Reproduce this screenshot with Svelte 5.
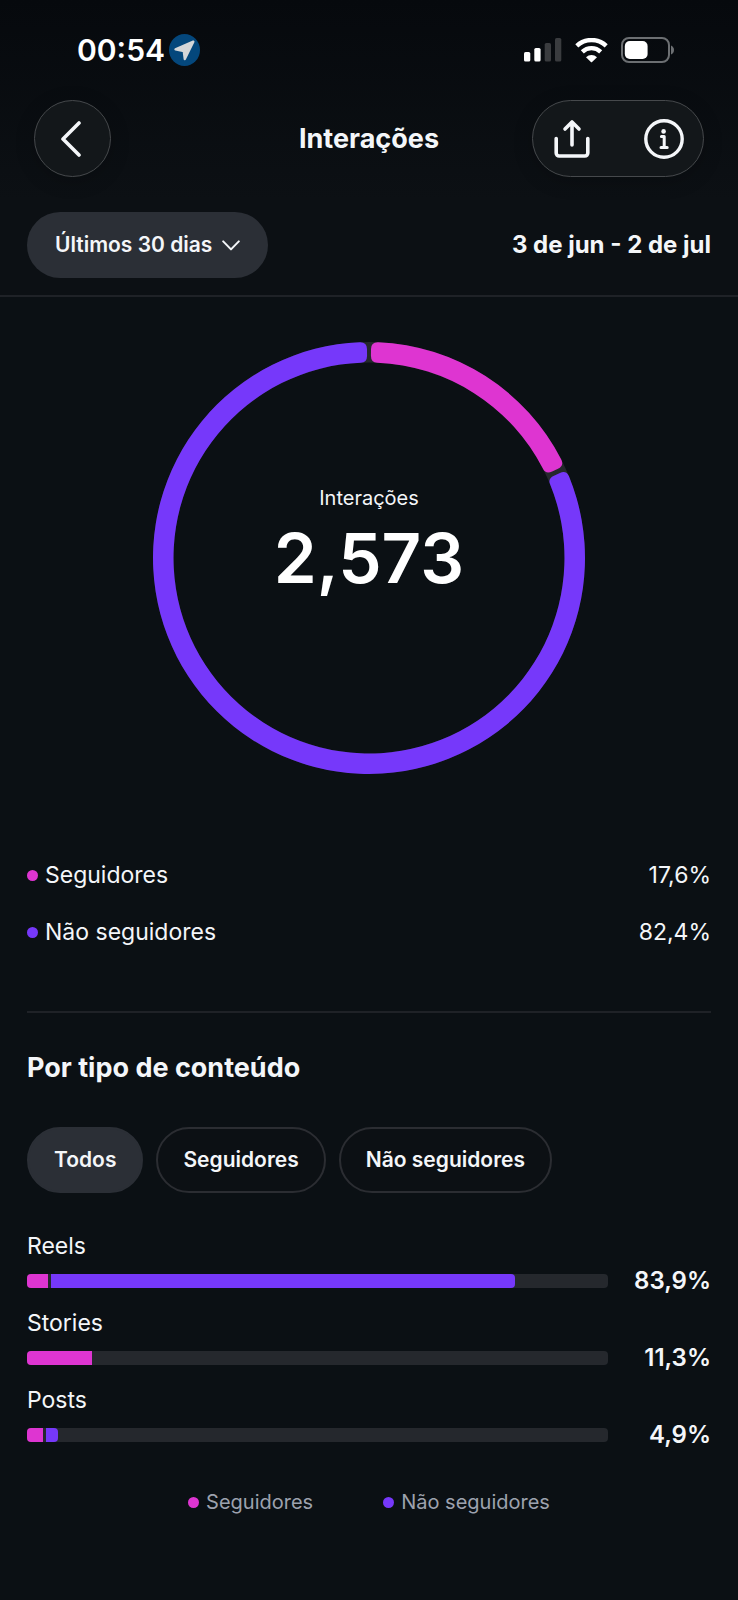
<script lang="ts">
  type Audience = "all" | "followers" | "others";

  const followers = 17.6;

  const split = [
    { label: "Seguidores", value: "17,6%", tone: "pink" },
    { label: "Não seguidores", value: "82,4%", tone: "purple" },
  ];

  const chips: { id: Audience; label: string }[] = [
    { id: "all", label: "Todos" },
    { id: "followers", label: "Seguidores" },
    { id: "others", label: "Não seguidores" },
  ];

  const types = [
    { name: "Reels", total: "83,9%", pink: 3.7, purple: 79.7 },
    { name: "Stories", total: "11,3%", pink: 11.2, purple: 0 },
    { name: "Posts", total: "4,9%", pink: 2.7, purple: 2.2 },
  ];

  let audience = $state<Audience>("all");
  let period = $state("30");

  const SIZE = 434;
  const OUTER = 216;
  const INNER = 195.5;
  const CORNER = 7;
  const GAP = 1.1;

  function point(radius: number, deg: number) {
    const rad = ((deg - 90) * Math.PI) / 180;
    const x = SIZE / 2 + radius * Math.cos(rad);
    const y = SIZE / 2 + radius * Math.sin(rad);
    return `${x.toFixed(2)} ${y.toFixed(2)}`;
  }

  // Ring slice between two angles, with all four corners rounded.
  function slice(from: number, to: number) {
    const cut = (CORNER / OUTER) * (180 / Math.PI);
    const large = to - from > 180 ? 1 : 0;
    return [
      `M${point(OUTER, from + cut)}`,
      `A${OUTER} ${OUTER} 0 ${large} 1 ${point(OUTER, to - cut)}`,
      `Q${point(OUTER, to)} ${point(OUTER - CORNER, to)}`,
      `L${point(INNER + CORNER, to)}`,
      `Q${point(INNER, to)} ${point(INNER, to - cut)}`,
      `A${INNER} ${INNER} 0 ${large} 0 ${point(INNER, from + cut)}`,
      `Q${point(INNER, from)} ${point(INNER + CORNER, from)}`,
      `L${point(OUTER - CORNER, from)}`,
      `Q${point(OUTER, from)} ${point(OUTER, from + cut)}Z`,
    ].join("");
  }

  // The first slice keeps its full share; the gap is taken from the second.
  const turn = (followers / 100) * 360 + GAP;
  const pinkSlice = slice(GAP / 2, turn + GAP / 4);
  const purpleSlice = slice(turn + GAP * 1.4, 360 - GAP / 2);
</script>

<div class="screen">
  <div class="top">
    <div class="status">
      <div class="clock">
        <span>00:54</span>
        <svg width="31" height="32" viewBox="0 0 31 32" aria-hidden="true">
          <ellipse cx="15.5" cy="16" rx="15.5" ry="16" fill="#04477c" />
          <path
            d="M24.3 7.6 6.5 15.3 14.8 17.2 15.8 25Z"
            fill="#d4d6d8"
            stroke="#d4d6d8"
            stroke-width="2.4"
            stroke-linejoin="round"
          />
        </svg>
      </div>
      <div class="indicators" aria-hidden="true">
        <svg width="38" height="24" viewBox="0 0 38 24">
          <rect x="0" y="14" width="6.3" height="9.5" rx="1.6" fill="#fff" />
          <rect x="10.3" y="10" width="6.3" height="13.5" rx="1.6" fill="#fff" />
          <rect x="20.7" y="5" width="6.3" height="18.5" rx="1.6" fill="#3a3c3f" />
          <rect x="31" y="0" width="6.3" height="23.5" rx="1.6" fill="#3a3c3f" />
        </svg>
        <svg width="33" height="25" viewBox="0 0 33 25" fill="none" stroke="#fff">
          <path d="M1.8 7.8A21.5 21.5 0 0 1 31.2 7.8" stroke-width="4.4" />
          <path d="M7.3 13.8A13.4 13.4 0 0 1 25.7 13.8" stroke-width="4.4" />
          <path
            d="M11 19.2A8 8 0 0 1 22 19.2L17.1 24.1Q16.5 24.6 15.9 24.1Z"
            fill="#fff"
            stroke="none"
          />
        </svg>
        <svg width="53" height="26" viewBox="0 0 53 26">
          <rect x="1" y="1" width="47" height="24" rx="7" fill="none" stroke="#6c6f72" stroke-width="2" />
          <rect x="3.8" y="4" width="22.8" height="18" rx="5" fill="#fff" />
          <path d="M50 8.5Q53 10 53 13T50 17.5Z" fill="#6c6f72" />
        </svg>
      </div>
    </div>

    <header class="bar">
      <button class="glass back" type="button" aria-label="Voltar">
        <svg width="20" height="36" viewBox="0 0 20 36" fill="none" stroke="#f4f6f9" stroke-width="3.6" stroke-linecap="round" stroke-linejoin="round">
          <path d="M18 2 2 18 18 34" />
        </svg>
      </button>
      <h1>Interações</h1>
      <div class="glass actions">
        <button type="button" aria-label="Compartilhar">
          <svg width="36" height="40" viewBox="0 0 36 40" fill="none" stroke="#f4f6f9" stroke-width="3.6" stroke-linecap="round" stroke-linejoin="round">
            <path d="M2.2 19.5V34a3 3 0 0 0 3 3h25.6a3 3 0 0 0 3-3V19.5" />
            <path d="M18 26V3M11 10l7-7 7 7" />
          </svg>
        </button>
        <button type="button" aria-label="Informações">
          <svg width="40" height="40" viewBox="0 0 40 40" fill="none" stroke="#f4f6f9" stroke-linecap="round" stroke-linejoin="round">
            <circle cx="20" cy="20" r="18.2" stroke-width="3.4" />
            <circle cx="19.6" cy="12.4" r="2.3" fill="#f4f6f9" stroke="none" />
            <path d="M17.4 17.6h2.8v10.6M17 28.4h6.2" stroke-width="3" />
          </svg>
        </button>
      </div>
    </header>

    <div class="filters">
      <label class="period">
        <select bind:value={period} aria-label="Período">
          <option value="7">Últimos 7 dias</option>
          <option value="30">Últimos 30 dias</option>
          <option value="90">Últimos 90 dias</option>
        </select>
        <svg width="18" height="11" viewBox="0 0 18 11" fill="none" stroke="#f4f6f9" stroke-width="2" stroke-linecap="round" stroke-linejoin="round" aria-hidden="true">
          <path d="M1.2 1.4 9 9.4l7.8-8" />
        </svg>
      </label>
      <strong>3 de jun - 2 de jul</strong>
    </div>
  </div>

  <main>
    <div class="donut">
      <svg viewBox="0 0 {SIZE} {SIZE}" aria-hidden="true">
        <circle cx={SIZE / 2} cy={SIZE / 2} r={(OUTER + INNER) / 2} fill="none" stroke="#25282d" stroke-width={OUTER - INNER} />
        <path d={pinkSlice} fill="#de35d1" />
        <path d={purpleSlice} fill="#7638fa" />
      </svg>
      <div class="total">
        <span class="total-label">Interações</span>
        <span class="total-value">2,573</span>
      </div>
    </div>

    <ul class="split">
      {#each split as row}
        <li>
          <span class="key"><i class="dot {row.tone}"></i>{row.label}</span>
          <span>{row.value}</span>
        </li>
      {/each}
    </ul>

    <section>
      <h2>Por tipo de conteúdo</h2>
      <div class="chips">
        {#each chips as chip}
          <button
            type="button"
            class="chip"
            class:active={audience === chip.id}
            aria-pressed={audience === chip.id}
            onclick={() => (audience = chip.id)}
          >
            {chip.label}
          </button>
        {/each}
      </div>

      <div class="types">
        {#each types as type}
          <div class="type">
            <span class="type-name">{type.name}</span>
            <div class="type-row">
              <div class="track">
                <div class="pink" style:width="{type.pink}%"></div>
                <div class="purple" style:width="{type.purple}%"></div>
              </div>
              <span class="type-total">{type.total}</span>
            </div>
          </div>
        {/each}
      </div>

      <div class="legend">
        <span class="key"><i class="dot pink"></i>Seguidores</span>
        <span class="key"><i class="dot purple"></i>Não seguidores</span>
      </div>
    </section>
  </main>
</div>

<style>
  :global(body) {
    margin: 0;
    background: #0b1014;
  }

  .screen {
    min-height: 100vh;
    color: #f4f6f9;
    background: #0b1014;
    font-family: Inter, "Liberation Sans", sans-serif;
    font-size: 23px;
    line-height: 30px;
  }

  button,
  select {
    padding: 0;
    border: 0;
    background: none;
    color: inherit;
    font: inherit;
    cursor: pointer;
  }

  svg {
    display: block;
  }

  .top {
    background: linear-gradient(#06090d, #0c1014 200px);
    border-bottom: 2px solid #1f2227;
  }

  .status {
    display: flex;
    align-items: center;
    justify-content: space-between;
    height: 100px;
    padding: 0 64px 0 77px;
  }

  .clock {
    display: flex;
    align-items: center;
    gap: 4px;
    color: #fff;
    font-size: 30px;
    font-weight: 600;
  }

  .indicators {
    display: flex;
    align-items: center;
    gap: 13px;
  }

  .bar {
    display: grid;
    grid-template-columns: 1fr auto 1fr;
    align-items: center;
    padding: 0 34px;
  }

  h1,
  h2 {
    margin: 0;
    font-size: 27px;
    font-weight: 700;
    line-height: 34px;
  }

  .glass {
    box-sizing: border-box;
    display: flex;
    align-items: center;
    height: 77px;
    border: 1px solid #46494c;
    border-radius: 39px;
    background: #13171a;
    box-shadow: 0 4px 20px rgb(0 0 0 / 0.2);
  }

  .back {
    justify-content: center;
    width: 77px;
  }

  .back svg {
    margin-right: 3px;
  }

  .actions {
    justify-self: end;
    gap: 54px;
    padding: 0 19px 0 21px;
  }

  .filters {
    display: flex;
    align-items: center;
    justify-content: space-between;
    padding: 35px 27px 17px;
  }

  .filters strong {
    font-size: 24px;
    font-weight: 700;
  }

  .period {
    display: flex;
    align-items: center;
    gap: 9px;
    height: 66px;
    padding: 0 28px;
    border-radius: 33px;
    background: #2b2f36;
    font-size: 21px;
    font-weight: 600;
  }

  .period select {
    appearance: none;
  }

  main {
    padding: 0 27px 80px;
  }

  .donut {
    display: grid;
    place-items: center;
    padding: 44px 0 67px;
  }

  .donut > * {
    grid-area: 1 / 1;
  }

  .donut svg {
    width: 434px;
    max-width: 100%;
  }

  .total {
    display: flex;
    flex-direction: column;
    align-items: center;
    gap: 12px;
    padding-bottom: 36px;
  }

  .total-label {
    font-size: 20px;
    line-height: 24px;
  }

  .total-value {
    color: #fff;
    font-size: 69px;
    font-weight: 600;
    line-height: 72px;
  }

  .split {
    display: flex;
    flex-direction: column;
    gap: 27px;
    margin: 0;
    padding: 18px 0 64px;
    border-bottom: 2px solid #1f2227;
    list-style: none;
  }

  .split li {
    display: flex;
    justify-content: space-between;
  }

  .key {
    display: flex;
    align-items: center;
    gap: 7px;
  }

  .dot {
    width: 11px;
    height: 11px;
    border-radius: 50%;
  }

  .pink {
    background: #de35d1;
  }

  .purple {
    background: #7638fa;
  }

  h2 {
    padding: 38px 0 42px;
  }

  .chips {
    display: flex;
    flex-wrap: wrap;
    gap: 13px;
  }

  .chip {
    box-sizing: border-box;
    height: 66px;
    padding: 0 25px;
    border: 2px solid #2b2d32;
    border-radius: 33px;
    background: #0c1014;
    font-size: 21px;
    font-weight: 600;
  }

  .chip.active {
    border-color: #2b2f36;
    background: #2b2f36;
  }

  .types {
    display: flex;
    flex-direction: column;
    gap: 10px;
    padding: 38px 0 35px;
  }

  .type {
    display: flex;
    flex-direction: column;
    gap: 3px;
  }

  .type-row {
    display: flex;
    align-items: center;
  }

  .track {
    display: flex;
    flex: 1;
    gap: 3px;
    height: 14px;
    overflow: hidden;
    border-radius: 4px;
    background: #25282d;
  }

  .track .purple {
    border-radius: 0 4px 4px 0;
  }

  .type-total {
    width: 103px;
    font-size: 24px;
    font-weight: 600;
    line-height: 34px;
    text-align: right;
  }

  .legend {
    display: flex;
    justify-content: center;
    gap: 70px;
    color: #9da2ae;
    font-size: 20px;
  }
</style>
